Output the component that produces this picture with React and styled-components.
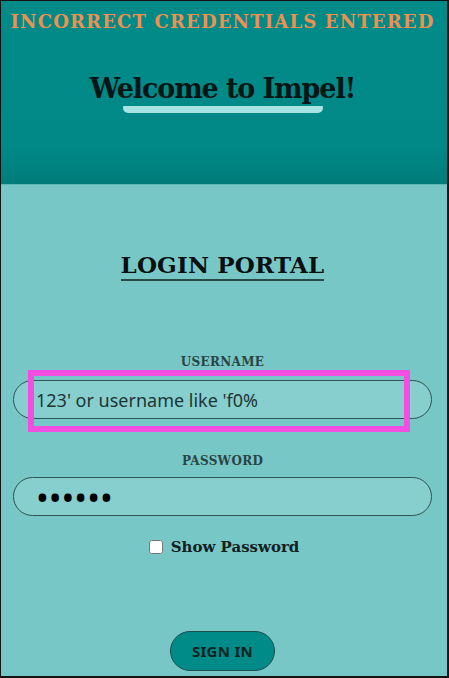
import React from "react";
import styled, { createGlobalStyle } from "styled-components";

const Global = createGlobalStyle`
  html, body { margin: 0; padding: 0; background: #78c7c7; }
  * { box-sizing: border-box; }
`;

const Frame = styled.div`
  width: 449px;
  height: 678px;
  border-style: solid;
  border-color: #141414;
  border-width: 1px 2px 2px 1px;
  background: #78c7c7;
  overflow: hidden;
  display: flex;
  flex-direction: column;
`;

const Header = styled.header`
  height: 183px;
  flex: none;
  padding: 10px 3px 0 0;
  background: linear-gradient(to bottom, #008a88 0%, #008987 80%, #007c7a 100%);
  box-shadow: 0 1px 0 #5db6b4;
  display: flex;
  flex-direction: column;
  align-items: center;
`;

const ErrorText = styled.div`
  font-family: "DejaVu Serif", serif;
  font-weight: bold;
  font-size: 18px;
  line-height: 22px;
  letter-spacing: 1.15px;
  color: #f08f4e;
  white-space: nowrap;
`;

const Title = styled.h1`
  margin: 40px 0 0;
  font-family: "DejaVu Serif", serif;
  font-weight: bold;
  font-size: 27px;
  line-height: 32px;
  letter-spacing: -1.1px;
  color: #061616;
`;

const TitleBar = styled.div`
  width: 200px;
  height: 7px;
  margin-top: 1px;
  background: #a6e3e3;
  border-radius: 1px 1px 5px 5px;
`;

const Main = styled.main`
  flex: 1;
  padding: 0 3px 0 0;
  display: flex;
  flex-direction: column;
  align-items: center;
`;

const PortalTitle = styled.h2`
  margin: 67px 0 0;
  font-family: "DejaVu Serif", serif;
  font-weight: bold;
  font-size: 23px;
  line-height: 28px;
  letter-spacing: 0.2px;
  color: #0a0f0f;
  border-bottom: 2px solid #2a4a4a;
`;

const Label = styled.label`
  display: block;
  margin-top: ${(p) => p.$top}px;
  font-family: "DejaVu Serif", serif;
  font-weight: bold;
  font-size: 12px;
  line-height: 16px;
  letter-spacing: 0.3px;
  color: #284545;
`;

const Field = styled.div`
  position: relative;
  align-self: flex-start;
  margin-left: 12px;
  margin-top: ${(p) => p.$top}px;
`;

const Input = styled.input`
  display: block;
  width: 419px;
  height: 39px;
  padding: 0 20px 0 22px;
  border: 1.5px solid #2c5555;
  border-radius: 20px;
  background: #87cfce;
  font-family: "Noto Sans", sans-serif;
  font-size: ${(p) => (p.type === "password" ? 34 : 18)}px;
  color: ${(p) => (p.type === "password" ? "#000" : "#1d3535")};
  outline: none;
`;

const Highlight = styled.div`
  position: absolute;
  left: 15px;
  top: -10px;
  width: 382px;
  height: 62px;
  border: 6px solid #f24fe2;
  pointer-events: none;
`;

const CheckRow = styled.label`
  margin-top: 22px;
  margin-left: 3px;
  display: flex;
  align-items: center;
  gap: 8px;
  font-family: "DejaVu Serif", serif;
  font-weight: bold;
  font-size: 15px;
  line-height: 18px;
  letter-spacing: 0;
  color: #122020;
`;

const Check = styled.input`
  margin: 0;
  width: 14px;
  height: 14px;
`;

const Button = styled.button`
  margin-top: 75px;
  width: 105px;
  height: 40px;
  border: 1.5px solid #1f4d4d;
  border-radius: 20px;
  background: #008b88;
  font-family: "Noto Sans", sans-serif;
  font-weight: bold;
  font-size: 15px;
  letter-spacing: 0.3px;
  color: #0c2424;
  cursor: pointer;
`;

export default function App() {
  return (
    <>
      <Global />
      <Frame>
        <Header>
          <ErrorText>INCORRECT CREDENTIALS ENTERED</ErrorText>
          <Title>Welcome to Impel!</Title>
          <TitleBar />
        </Header>
        <Main>
          <PortalTitle>LOGIN PORTAL</PortalTitle>
          <Label $top={73}>USERNAME</Label>
          <Field $top={10}>
            <Input type="text" defaultValue="123' or username like 'f0%" />
            <Highlight />
          </Field>
          <Label $top={34}>PASSWORD</Label>
          <Field $top={8}>
            <Input type="password" defaultValue="123456" />
          </Field>
          <CheckRow>
            <Check type="checkbox" />
            Show Password
          </CheckRow>
          <Button>SIGN IN</Button>
        </Main>
      </Frame>
    </>
  );
}
